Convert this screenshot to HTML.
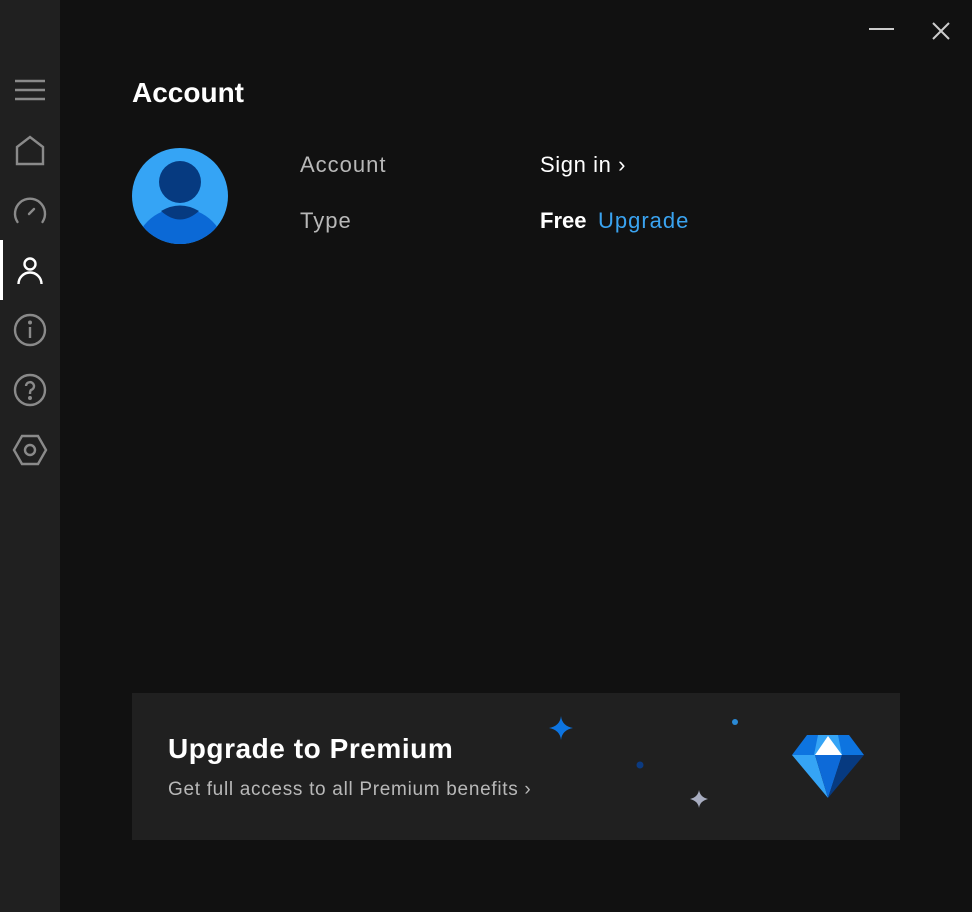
<!DOCTYPE html>
<html><head><meta charset="utf-8"><style>
*{margin:0;padding:0;box-sizing:border-box}
body{width:972px;height:912px;background:#111111;font-family:"Liberation Sans","Segoe UI",sans-serif;position:relative;overflow:hidden;color:#fff}
.side{position:absolute;left:0;top:0;width:60px;height:912px;background:#202020}
.side svg{position:absolute;left:10px;width:40px;height:40px}
.t{position:absolute;white-space:nowrap}
</style></head><body>
<div class="side">
<svg style="top:70px" viewBox="0 0 40 40" stroke="#8a8a8a" stroke-width="2.4" fill="none"><path d="M5 11H35M5 20H35M5 29H35"/></svg>
<svg style="top:130px" viewBox="0 0 40 40" stroke="#8a8a8a" stroke-width="2.4" fill="none"><path d="M7 34V17L20 7L33 17V34Z"/></svg>
<svg style="top:190px" viewBox="0 0 40 40" stroke="#8a8a8a" stroke-width="2.4" fill="none" stroke-linecap="round"><path d="M7.5 32A15 15 0 1 1 32.5 32"/><path d="M19 24L24 19"/></svg>
<div style="position:absolute;left:0;top:240px;width:3px;height:60px;background:#fff"></div>
<svg style="top:250px" viewBox="0 0 40 40" stroke="#fff" stroke-width="2.4" fill="none"><circle cx="20" cy="14" r="5.5"/><path d="M8.5 34A11.5 11.5 0 0 1 31.5 34"/></svg>
<svg style="top:310px" viewBox="0 0 40 40" stroke="#8a8a8a" stroke-width="2.4" fill="none"><circle cx="20" cy="20" r="15"/><path d="M20 17V28"/><circle cx="20" cy="12.5" r="0.8" fill="#8a8a8a"/></svg>
<svg style="top:370px" viewBox="0 0 40 40" stroke="#8a8a8a" stroke-width="2.4" fill="none"><circle cx="20" cy="20" r="15"/><path d="M16 16A4 4 0 1 1 21 20Q20 21 20 24"/><circle cx="20" cy="28" r="0.8" fill="#8a8a8a"/></svg>
<svg style="top:430px" viewBox="0 0 40 40" stroke="#8a8a8a" stroke-width="2.4" fill="none"><path d="M12 6H28L36 20L28 34H12L4 20Z"/><circle cx="20" cy="20" r="5"/></svg>
</div>
<svg style="position:absolute;left:866px;top:20px" width="90" height="24"><path d="M3 9H28" stroke="#ccc" stroke-width="2"/><path d="M67 3L83 19M83 3L67 19" stroke="#ccc" stroke-width="2"/></svg>
<div class="t" style="left:132px;top:77px;font-size:28px;font-weight:bold">Account</div>
<svg style="position:absolute;left:132px;top:148px" width="96" height="96" viewBox="0 0 96 96"><defs><clipPath id="c"><circle cx="48" cy="48" r="48"/></clipPath></defs><circle cx="48" cy="48" r="48" fill="#35a4f5"/><g clip-path="url(#c)"><ellipse cx="48" cy="106" rx="46" ry="46" fill="#0b69d6"/><circle cx="48" cy="34" r="21" fill="#063a80"/></g><path d="M29 63Q48 52 67 63Q48 80 29 63Z" fill="#063a80"/></svg>
<div class="t" style="left:300px;top:152px;font-size:22px;color:#b8b8b8;letter-spacing:1px">Account</div>
<div class="t" style="left:300px;top:208px;font-size:22px;color:#b8b8b8;letter-spacing:1px">Type</div>
<div class="t" style="left:540px;top:152px;font-size:22px;letter-spacing:0.6px">Sign in ›</div>
<div class="t" style="left:540px;top:208px;font-size:22px;font-weight:bold">Free</div>
<div class="t" style="left:598px;top:208px;font-size:22px;color:#3aa3f0;letter-spacing:1px">Upgrade</div>
<div style="position:absolute;left:132px;top:693px;width:768px;height:147px;background:#202020"></div>
<div class="t" style="left:168px;top:733px;font-size:28px;font-weight:bold;letter-spacing:0.55px">Upgrade to Premium</div>
<div class="t" style="left:168px;top:779px;font-size:19px;color:#b8b8b8;letter-spacing:0.7px">Get full access to all Premium benefits ›</div>
<svg style="position:absolute;left:540px;top:700px" width="340" height="120" viewBox="540 700 340 120">
<path d="M561 716Q562 726 573 728Q562 730 561 740Q560 730 549 728Q560 726 561 716Z" fill="#0d74e0"/>
<path d="M699 790Q700 797 708 799Q700 801 699 808Q698 801 690 799Q698 797 699 790Z" fill="#a8adc0"/>
<circle cx="735" cy="722" r="3" fill="#2a8ad6"/>
<circle cx="640" cy="765" r="3.5" fill="#0b3a80"/>
<path d="M807 735H849L864 755H792Z" fill="#0d74e0"/>
<path d="M818 735H838L842 755H814Z" fill="#35a4f5"/>
<path d="M828 736L842 755H815Z" fill="#fff"/>
<path d="M792 755H815L828 798Z" fill="#35a4f5"/>
<path d="M815 755H842L828 798Z" fill="#0d6ad8"/>
<path d="M842 755H864L828 798Z" fill="#073a80"/>
</svg>
</body></html>
